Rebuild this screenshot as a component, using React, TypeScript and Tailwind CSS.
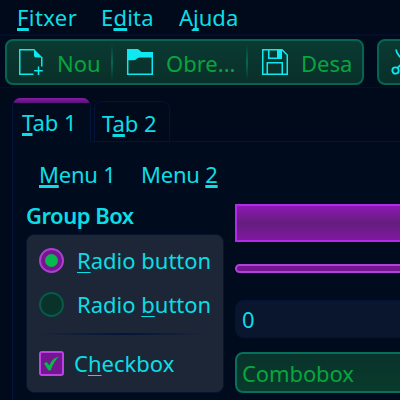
import React from 'react';

interface MnemonicProps {
  text: string;
  index?: number;
  thin?: boolean;
  className?: string;
}

// Label with one underlined access key
const Mnemonic: React.FC<MnemonicProps> = ({ text, index = -1, thin, className = '' }) => {
  if (index < 0) {
    return <span className={`block whitespace-pre ${className}`}>{text}</span>;
  }
  return (
    <span className={`block whitespace-pre ${className}`}>
      {text.slice(0, index)}
      <span
        className={
          thin
            ? 'underline decoration-1 underline-offset-[3px] [text-decoration-skip-ink:none]'
            : 'underline decoration-[3px] underline-offset-[2px] [text-decoration-skip-ink:none]'
        }
      >
        {text[index]}
      </span>
      {text.slice(index + 1)}
    </span>
  );
};

const NewIcon = () => (
  <svg width="26" height="28" viewBox="0 0 26 28" fill="none" stroke="#0ee8f0" strokeWidth="1.5">
    <path d="M15.500 26.250H1.750V1.750H16.500M23.750 9V18.500" />
    <path d="M16 1L24.500 9.500H18Q16 9.500 16 7.500Z" fill="#0ee8f0" stroke="none" />
    <path d="M20.500 18.500V27M16.200 22.700H24.700" />
  </svg>
);

const OpenIcon = () => (
  <svg width="28" height="28" viewBox="0 0 28 28" fill="none">
    <path d="M1 1H12L15.500 4H27V9.500H14Q11.500 9.500 10.500 11Q9.500 12.200 7.500 12.200H1Z" fill="#0ee8f0" />
    <path d="M1.700 8V26.250H26.250V8" stroke="#0ee8f0" strokeWidth="1.5" />
  </svg>
);

const SaveIcon = () => (
  <svg width="28" height="28" viewBox="0 0 28 28" fill="none" stroke="#0ee8f0" strokeWidth="1.5">
    <path d="M1.750 1.750H21L26.250 7V26.250H1.750Z" />
    <path d="M7.750 1.750V10.250H20.250V1.750M6.250 26.250V14.750H21.250V26.250" />
    <path d="M16 1H20.500V10H16Z" fill="#0ee8f0" stroke="none" />
  </svg>
);

const CutIcon = () => (
  <svg width="28" height="28" viewBox="0 0 28 28" fill="none" stroke="#0ee8f0" strokeWidth="1.8">
    <circle cx="4.500" cy="22.500" r="3.200" />
    <circle cx="22" cy="22.500" r="3.200" />
    <path d="M5 1.500C5.500 6 9 9 20 20M21.500 1.500C21 6 17.500 9 6.500 20" />
  </svg>
);

const ToolDivider = () => (
  <div className="h-[36px] w-0.5 shrink-0 bg-linear-to-b from-transparent via-[#076654] to-transparent" />
);

const App: React.FC = () => {
  return (
    <div className="flex h-[400px] w-[400px] flex-col overflow-hidden bg-[#000a1b] font-['Noto_Sans',sans-serif] text-[22px] leading-[30px] text-[#0cdde5]">
      <div className="flex h-[36px] shrink-0 border-b-2 border-[#020e2b] pt-[2px] pl-[17px]">
        <Mnemonic text="Fitxer" index={0} className="w-[84px] tracking-[0.4px]" />
        <Mnemonic text="Edita" index={1} className="w-[78px] tracking-[0.2px]" />
        <Mnemonic text="Ajuda" index={1} />
      </div>

      <div className="flex h-[52px] shrink-0 border-b border-[#02102f] pt-[3px] pl-[5px] text-[#05a63e]">
        <div className="flex h-[46px] w-[359px] shrink-0 items-center rounded-lg border-2 border-[#056553] bg-linear-to-b from-[#093a31] to-[#09302a]">
          <div className="flex w-[104px] shrink-0 items-center pl-[11px]">
            <NewIcon />
            <Mnemonic text="Nou" className="ml-[13px] pt-[2px]" />
          </div>
          <ToolDivider />
          <div className="flex w-[133px] shrink-0 items-center pl-[13px]">
            <OpenIcon />
            <Mnemonic text="Obre..." className="ml-[12px] pt-[2px]" />
          </div>
          <ToolDivider />
          <div className="flex items-center pl-[13px]">
            <SaveIcon />
            <Mnemonic text="Desa" className="ml-[12px] pt-[2px]" />
          </div>
        </div>
        <div className="ml-[13px] flex h-[46px] w-[80px] shrink-0 items-center rounded-lg border-2 border-[#056553] bg-linear-to-b from-[#093a31] to-[#09302a] pl-[12px]">
          <CutIcon />
        </div>
      </div>

      <div className="flex grow flex-col pt-[10px] pl-3">
        <div className="flex h-[44px] shrink-0">
          <div className="w-[79px] shrink-0 overflow-hidden rounded-t-lg border-r border-l border-[#02143a] bg-[#000c1d]">
            <div className="h-[5px] bg-linear-to-b from-[#8b1aac] to-[#581174]" />
            <Mnemonic text="Tab 1" index={0} className="pt-[4px] pl-[9px]" />
          </div>
          <div className="flex grow border-b border-[#02143a] pt-[3px] pl-[3px]">
            <div className="h-full w-[76px] rounded-t-lg border border-b-0 border-[#02143a]">
              <Mnemonic text="Tab 2" index={1} className="pt-[6px] pl-[7px]" />
            </div>
          </div>
        </div>

        <div className="flex grow flex-col border-l border-[#02143a] bg-[#000c1d]">
          <div className="flex h-[58px] shrink-0 pt-[17px] pl-[26px]">
            <Mnemonic text="Menu 1" index={0} className="w-[102px] tracking-[-0.2px]" />
            <Mnemonic text="Menu 2" index={5} className="tracking-[-0.2px]" />
          </div>

          <div className="flex pl-[13px]">
            <div className="w-[198px] shrink-0">
              <Mnemonic text="Group Box" className="h-[34px] font-semibold tracking-[-0.5px]" />
              <div className="flex h-[159px] flex-col rounded-lg border border-[#061530] bg-[#1c2637] pl-3">
                <div className="mt-[11px] flex h-[28px] items-center">
                  <div className="flex size-[25px] items-center justify-center rounded-full border-2 border-[#ad3fd0] bg-[#75158f]">
                    <div className="size-[13px] rounded-full bg-[#05b94c]" />
                  </div>
                  <Mnemonic text="Radio button" index={0} thin className="ml-[13px]" />
                </div>
                <div className="mt-[16px] flex h-[28px] items-center">
                  <div className="size-[25px] rounded-full border-2 border-[#075a4a] bg-[#09322b]" />
                  <Mnemonic text="Radio button" index={6} thin className="ml-[13px]" />
                </div>
                <div className="mt-[15px] h-[2px] w-[168px] bg-linear-to-r from-transparent via-[#04143b] to-transparent" />
                <div className="mt-[14px] flex h-[28px] items-center">
                  <div className="flex size-[25px] items-center justify-center rounded-[3px] border-2 border-[#bd42e5] bg-[#75158f]">
                    <svg width="19" height="19" viewBox="0 0 19 19" fill="#05b94c">
                      <path d="M2 9.500L4.500 8L7.500 11.500C9 7 11.500 4 17 2.500C13 6.500 10.500 11 8.500 16.500H6.500Z" />
                    </svg>
                  </div>
                  <Mnemonic text="Checkbox" index={1} thin className="ml-[10px]" />
                </div>
              </div>
            </div>

            <div className="ml-[11px] flex grow flex-col pt-[4px]">
              <div className="h-[38px] w-[200px] border-2 border-[#b32bea] bg-linear-to-b from-[#8c18b3] via-[#641d7e] to-[#7f199f]" />
              <div className="mt-[22px] h-[9px] w-[200px] rounded-full border-2 border-[#b240dc] bg-[#75158f]" />
              <div className="mt-[27px] h-[38px] w-[200px] rounded-lg border border-[#03133a] bg-[#09162e] pt-[3px] pl-[6px]">
                0
              </div>
              <div className="mt-[14px] h-[41px] w-[200px] rounded-lg border-2 border-[#05705b] bg-linear-to-b from-[#09322b] to-[#093b2c] pt-[4px] pl-[5px] tracking-[-0.1px] text-[#05a63e]">
                Combobox
              </div>
            </div>
          </div>
        </div>
      </div>
    </div>
  );
};

export default App;
